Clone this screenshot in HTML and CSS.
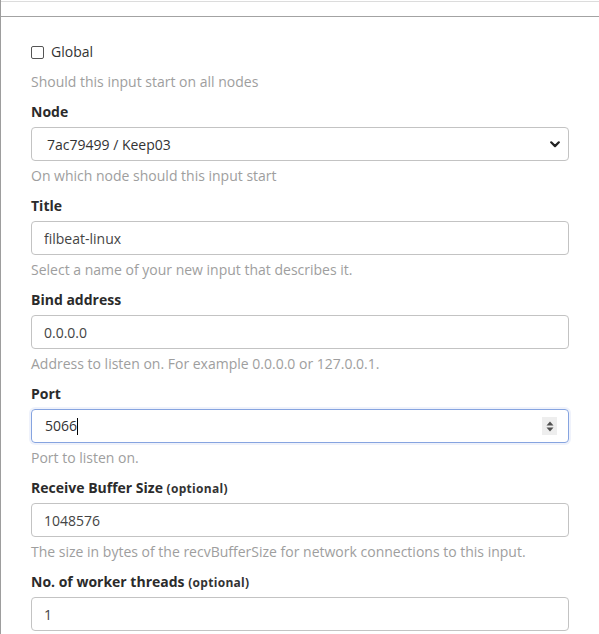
FILE: index.html
```html
<!DOCTYPE html>
<html lang="en">
<head>
<meta charset="utf-8">
<title>Input settings</title>
<link rel="stylesheet" href="styles.css">
</head>
<body>
<div class="frame">
  <div class="topbar"></div>
  <form class="form">
    <div class="group group-check">
      <label class="check"><input type="checkbox" class="checkbox"> <span>Global</span></label>
      <p class="help help-check">Should this input start on all nodes</p>
    </div>
    <div class="group">
      <label class="label">Node</label>
      <div class="select-wrap">
        <select class="control select"><option>7ac79499 / Keep03</option></select>
        <svg class="chev" width="10" height="7" viewBox="0 0 10 7"><path d="M1.2 1.3 L5 5.1 L8.8 1.3" fill="none" stroke="#222" stroke-width="2.2" stroke-linecap="round" stroke-linejoin="round"/></svg>
      </div>
      <p class="help">On which node should this input start</p>
    </div>
    <div class="group">
      <label class="label">Title</label>
      <input class="control" type="text" value="filbeat-linux">
      <p class="help">Select a name of your new input that describes it.</p>
    </div>
    <div class="group">
      <label class="label">Bind address</label>
      <input class="control" type="text" value="0.0.0.0">
      <p class="help">Address to listen on. For example 0.0.0.0 or 127.0.0.1.</p>
    </div>
    <div class="group">
      <label class="label">Port</label>
      <div class="num-wrap focused">
        <span class="num-value">5066</span><span class="caret"></span>
        <span class="spin"><svg width="8" height="11" viewBox="0 0 8 11"><path d="M4 0.5 L7.5 4.5 L0.5 4.5 Z M4 10.5 L7.5 6.5 L0.5 6.5 Z" fill="#505050"/></svg></span>
      </div>
      <p class="help">Port to listen on.</p>
    </div>
    <div class="group">
      <label class="label">Receive Buffer Size <small class="opt">(optional)</small></label>
      <input class="control" type="text" value="1048576">
      <p class="help">The size in bytes of the recvBufferSize for network connections to this input.</p>
    </div>
    <div class="group">
      <label class="label">No. of worker threads <small class="opt">(optional)</small></label>
      <input class="control" type="text" value="1">
    </div>
  </form>
</div>
</body>
</html>
```
FILE: styles.css
```css
* { box-sizing: border-box; }
html, body { margin: 0; padding: 0; background: #fff; }
body {
  font-family: "Open Sans", "Noto Sans", "Liberation Sans", sans-serif;
  font-size: 14px;
  line-height: 20px;
  color: #333;
  overflow: hidden;
  height: 634px;
}
.frame {
  border-left: 1px solid #9d9d9d;
  min-height: 634px;
  padding-top: 1px;
}
.topbar {
  height: 16px;
  border-top: 1px solid #dcdcdc;
  border-bottom: 1px solid #a3a3a3;
}
.form {
  padding: 25px 30px 0 30px;
}
.group { margin-bottom: 10px; }
.group-check { margin-bottom: 10px; }
.check {
  display: flex;
  align-items: center;
  height: 20px;
  color: #333;
}
.checkbox {
  appearance: none;
  -webkit-appearance: none;
  width: 13px;
  height: 13px;
  margin: 0 7px 0 0;
  border: 1px solid #555;
  border-radius: 2px;
  background: #fff;
}
.label {
  display: block;
  font-weight: 700;
  color: #2b2b2b;
  margin-bottom: 5px;
  height: 20px;
}
.opt { font-size: 12px; font-weight: 700; color: #333; letter-spacing: 0.3px; }
.help {
  margin: 5px 0 0 0;
  color: #9e9e9e;
  height: 20px;
}
.help-check { margin-top: 10px; }
.control {
  display: block;
  width: 100%;
  height: 34px;
  padding: 0 12px;
  border: 1px solid #c3c3c3;
  border-radius: 4px;
  font-family: inherit;
  font-size: 14px;
  color: #444;
  background: #fff;
  outline: none;
}
.select-wrap { position: relative; }
.select {
  appearance: none;
  -webkit-appearance: none;
  padding-left: 15px;
  color: #333;
}
.chev { position: absolute; right: 9px; top: 14px; }
.num-wrap {
  display: flex;
  align-items: center;
  height: 34px;
  padding: 0 12px 0 13px;
  border: 1px solid #86a4e0;
  border-radius: 4px;
  box-shadow: 0 0 0 2px rgba(120, 150, 220, 0.12);
  color: #333;
}
.num-value { color: #333; }
.caret { width: 1px; height: 17px; background: #000; margin-left: 0; }
.spin {
  margin-left: auto;
  width: 15px;
  height: 18px;
  background: #eee;
  display: flex;
  align-items: center;
  justify-content: center;
  margin-right: -1px;
}
```
